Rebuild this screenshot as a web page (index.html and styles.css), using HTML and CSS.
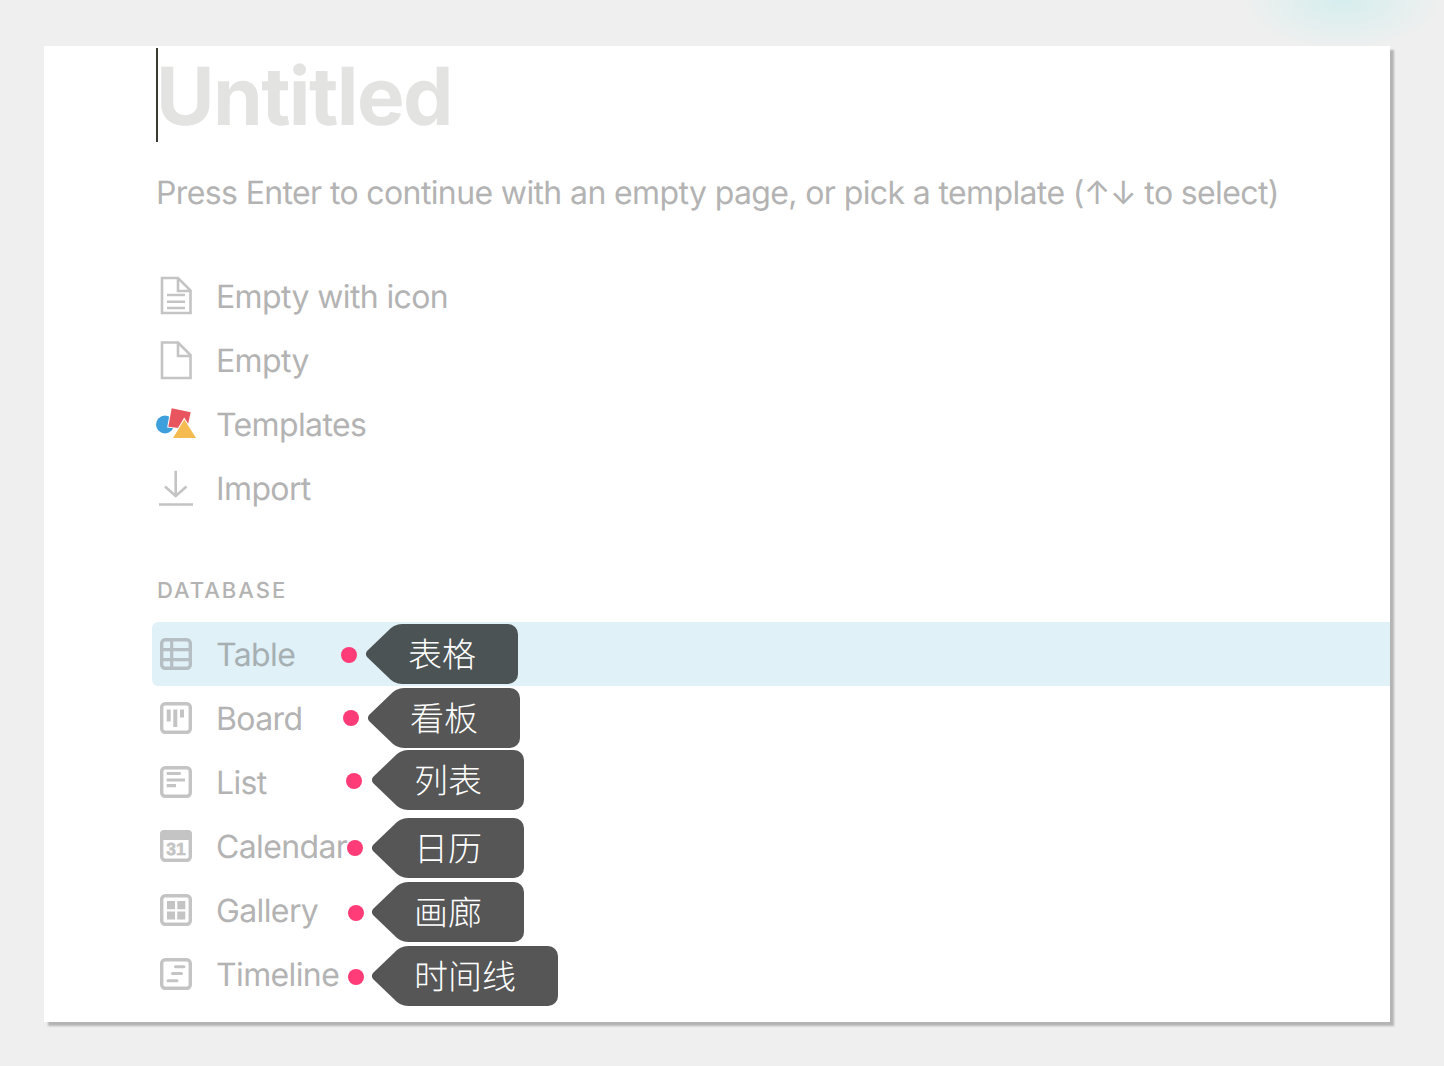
FILE: index.html
```html
<!DOCTYPE html>
<html lang="en">
<head>
<meta charset="utf-8">
<title>Untitled</title>
<link rel="stylesheet" href="styles.css">
</head>
<body>
<main class="card">
  <div class="content">
    <h1 class="title"><span class="title-text">Untitled</span></h1>
    <p class="hint">Press Enter to continue with an empty page, or pick a template (↑↓ to select)</p>

    <ul class="menu menu-basic">
      <li class="row">
        <svg class="icon" viewBox="0 0 40 40"><path class="ln" d="M6 1H22L34.500 13.500V36H6Z"/><path class="ln" d="M22 1V14H34.500"/><path class="ln" d="M11 18H29M11 24.700H29M11 31H29"/></svg>
        <span class="label">Empty with icon</span>
      </li>
      <li class="row">
        <svg class="icon" viewBox="0 0 40 40"><path class="ln" d="M6 1.500H22L34.500 14V37H6Z"/><path class="ln" d="M22 1.500V15H34.500"/></svg>
        <span class="label">Empty</span>
      </li>
      <li class="row">
        <svg class="icon" viewBox="0 0 40 40">
          <circle cx="9" cy="19.500" r="9" fill="#3d9fdb"/>
          <path d="M15.700 3.300L34.700 7.300L31 24L12.300 21.700Z" fill="#e9555f" stroke="#fff" stroke-width="2" paint-order="stroke"/>
          <path d="M28.300 14.500L40 33H17Z" fill="#f6bb50" stroke="#fff" stroke-width="2" paint-order="stroke"/>
        </svg>
        <span class="label">Templates</span>
      </li>
      <li class="row">
        <svg class="icon" viewBox="0 0 40 40"><path class="ln" d="M19.700 1.700V26M9 17.500L19.700 27L30.500 17.500M3 35.500H37"/></svg>
        <span class="label">Import</span>
      </li>
    </ul>

    <h2 class="section">DATABASE</h2>

    <ul class="menu">
      <li class="row row-active">
        <svg class="icon" viewBox="0 0 40 40"><rect class="box" x="5.700" y="5.700" width="28.600" height="28.600" rx="3.500"/><path class="ln-3" d="M5 15.700H35M5 25.700H35M15.700 5V35"/></svg>
        <span>Table</span>
        <div class="mark mark-table"><i class="dot dot-low"></i><b class="tag tag-active">表格</b></div>
      </li>
      <li class="row">
        <svg class="icon" viewBox="0 0 40 40"><rect class="box" x="5.700" y="5.700" width="28.600" height="28.600" rx="3.500"/><path class="fill" d="M10.700 11.500h4v12h-4zM17.300 11.500h4v17.500h-4zM24 11.500h4v8h-4z"/></svg>
        <span>Board</span>
        <div class="mark mark-board"><i class="dot"></i><b class="tag">看板</b></div>
      </li>
      <li class="row">
        <svg class="icon" viewBox="0 0 40 40"><rect class="box" x="5.700" y="5.700" width="28.600" height="28.600" rx="3.500"/><path class="ln-3" d="M10.700 11.500H24.700M10.700 18H29M10.700 23.700H20"/></svg>
        <span>List</span>
        <div class="mark mark-list"><i class="dot dot-low"></i><b class="tag">列表</b></div>
      </li>
      <li class="row">
        <svg class="icon" viewBox="0 0 40 40"><rect class="box" x="5.700" y="5.700" width="28.600" height="28.600" rx="3.500"/><path class="fill" d="M4 8a4 4 0 0 1 4-4h24a4 4 0 0 1 4 4v6H4z"/><text class="cal-num" x="20" y="29">31</text></svg>
        <span>Calendar</span>
        <div class="mark mark-calendar"><i class="dot"></i><b class="tag">日历</b></div>
      </li>
      <li class="row">
        <svg class="icon" viewBox="0 0 40 40"><rect class="box" x="5.700" y="5.700" width="28.600" height="28.600" rx="3.500"/><path class="fill" d="M11 11h8v8.300h-8zM21.300 11h8v8.300h-8zM11 21.500h8v8h-8zM21.300 21.500h8v8h-8z"/></svg>
        <span>Gallery</span>
        <div class="mark mark-gallery"><i class="dot dot-low"></i><b class="tag">画廊</b></div>
      </li>
      <li class="row">
        <svg class="icon" viewBox="0 0 40 40"><rect class="box" x="5.700" y="5.700" width="28.600" height="28.600" rx="3.500"/><path class="ln-round" d="M19.500 12.700H28M16.500 19.500H25.500M12 26.700H21"/></svg>
        <span>Timeline</span>
        <div class="mark mark-timeline"><i class="dot dot-low"></i><b class="tag">时间线</b></div>
      </li>
    </ul>
  </div>
</main>
</body>
</html>
```
FILE: styles.css
```css
* { box-sizing: border-box; }

html, body { margin: 0; height: 100%; }

body {
  height: 1066px;
  overflow: hidden;
  padding: 46px 54px 0 44px;
  background: radial-gradient(ellipse 100px 50px at 1342px 0, #d6eeee, rgba(214, 238, 238, 0)) #efefef;
  font-family: Inter, "Noto Sans CJK SC", sans-serif;
  color: #b3b3b3;
  letter-spacing: -0.039em;
  text-rendering: geometricPrecision;
}

.card {
  height: 976px;
  padding: 2px 0 16px 108px;
  background: #fff;
  box-shadow: 4px 4px 2px #b4b4b4;
}

.title {
  margin: 0 0 0 4px;
  height: 94px;
  border-left: 2px solid #3b3a32;
  font-size: 80px;
  font-weight: 700;
  line-height: 98px;
  letter-spacing: -0.02em;
  color: #e3e3e2;
}

.title-text { margin-left: -2px; }

.hint {
  margin: 28px 0 0 4px;
  height: 46px;
  font-size: 32px;
  line-height: 46px;
}

.menu {
  margin: 0;
  padding: 0;
  list-style: none;
}

.menu-basic { margin-top: 49px; }

.section {
  margin: 55px 0 16px 5px;
  height: 30px;
  font-size: 22px;
  font-weight: 500;
  line-height: 30px;
  letter-spacing: 2px;
}

.row {
  position: relative;
  display: flex;
  align-items: center;
  gap: 20px;
  height: 64px;
  padding-left: 4px;
  font-size: 32px;
  border-radius: 6px 0 0 6px;
}

.label { margin-bottom: 1px; }

.row-active {
  background: #e1f1f8;
  color: #a6b0b3;
}

.icon {
  flex: none;
  width: 40px;
  height: 40px;
  overflow: visible;
}

.ln, .ln-3, .ln-round, .box {
  fill: none;
  stroke: #c4c4c4;
  stroke-width: 2.600;
}

.ln-3 { stroke-width: 3.200; }
.ln-round { stroke-width: 3; stroke-linecap: round; }
.box { stroke-width: 3.400; }
.fill { fill: #c4c4c4; }

.row-active .box, .row-active .ln-3 { stroke: #b5bfc3; }

.cal-num {
  font-family: "Liberation Sans", sans-serif;
  font-size: 17.500px;
  font-weight: 700;
  letter-spacing: 0;
  text-anchor: middle;
  fill: #c4c4c4;
  stroke: #c4c4c4;
  stroke-width: 0.600;
}

.mark {
  position: absolute;
  display: flex;
  align-items: center;
  gap: 9px;
  letter-spacing: 0;
}

.mark-table { left: 189px; top: 2px; }
.mark-board { left: 191px; top: 2px; }
.mark-list { left: 194px; top: 0; gap: 10px; }
.mark-calendar { left: 195px; top: 4px; }
.mark-gallery { left: 196px; top: 4px; gap: 8px; }
.mark-timeline { left: 196px; top: 4px; gap: 8px; }

.dot {
  width: 16px;
  height: 16px;
  border-radius: 50%;
  background: #ff3c78;
}

.dot-low { margin-top: 2px; }

.tag {
  height: 60px;
  padding: 0 42px;
  border-radius: 10px;
  background: #565656;
  color: #fff;
  font-family: "Noto Sans CJK SC", sans-serif;
  font-size: 34px;
  font-weight: 300;
  line-height: 58px;
  clip-path: polygon(0 31px, 0 29px, 1px 27px, 25px 4px, 28px 2px, 32px 0.500px, 36px 0, 100% 0, 100% 100%, 36px 100%, 32px 59.500px, 28px 58px, 25px 56px, 1px 33px);
}

.tag-active { background: #4c5355; }
```
